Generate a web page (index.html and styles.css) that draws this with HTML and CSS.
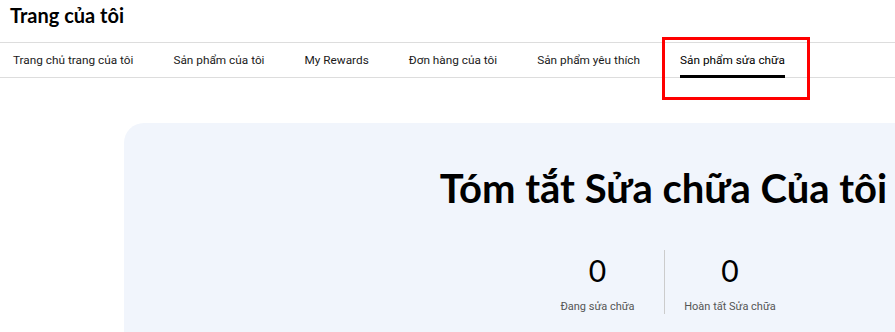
FILE: index.html
```html
<!DOCTYPE html>
<html lang="vi">
<head>
    <meta charset="UTF-8">
    <meta name="viewport" content="width=device-width, initial-scale=1.0">
    <title>Trang của tôi</title>
    <link rel="stylesheet" href="styles.css">
</head>
<body>
    <div class="page">
        <h1 class="page-title">Trang của tôi</h1>
        <nav class="tabs">
            <a class="tab" href="#">Trang chủ trang của tôi</a>
            <a class="tab" href="#">Sản phẩm của tôi</a>
            <a class="tab" href="#">My Rewards</a>
            <a class="tab" href="#">Đơn hàng của tôi</a>
            <a class="tab" href="#">Sản phẩm yêu thích</a>
            <a class="tab active" href="#">Sản phẩm sửa chữa<span class="highlight"></span></a>
        </nav>
        <section class="summary">
            <h2>Tóm tắt Sửa chữa Của tôi</h2>
            <div class="stats">
                <div class="stat">
                    <div class="stat-num">0</div>
                    <div class="stat-label">Đang sửa chữa</div>
                </div>
                <div class="stat">
                    <div class="stat-num">0</div>
                    <div class="stat-label">Hoàn tất Sửa chữa</div>
                </div>
            </div>
        </section>
    </div>
</body>
</html>
```
FILE: styles.css
```css
:root {
    --text-color: #000;
    --tab-color: #1a1a1a;
    --border-color: #ddd;
    --card-bg: #f1f5fc;
}
body {
    margin: 0;
    background: #fff;
    color: var(--text-color);
    font-family: 'Roboto', sans-serif;
}
.page {
    width: 895px;
    height: 332px;
    overflow: hidden;
}
.page-title {
    margin: 0;
    height: 42px;
    padding: 0 10px;
    font-family: 'Lato', sans-serif;
    font-size: 20px;
    font-weight: 700;
    line-height: 30px;
    box-sizing: border-box;
}
.tabs {
    display: flex;
    gap: 40px;
    padding: 0 13px;
    border-top: 1px solid var(--border-color);
    border-bottom: 1px solid var(--border-color);
    height: 34px;
}
.tab {
    position: relative;
    color: var(--tab-color);
    text-decoration: none;
    font-size: 11.8px;
    line-height: 34px;
    white-space: nowrap;
}
.tab.active {
    color: #000;
}
.tab.active::after {
    content: "";
    position: absolute;
    left: 0;
    right: 0;
    bottom: -1px;
    height: 3px;
    background: #000;
}
.highlight {
    position: absolute;
    top: -6px;
    left: -18px;
    right: -25px;
    bottom: -23px;
    border: 3px solid #f00;
}
.summary {
    margin: 45px 0 0 124px;
    width: 1079px;
    height: 209px;
    background: var(--card-bg);
    border-radius: 20px 20px 0 0;
    padding-top: 40px;
    box-sizing: border-box;
}
.summary h2 {
    margin: 0;
    text-align: center;
    font-family: 'Lato', sans-serif;
    font-size: 40px;
    font-weight: 700;
    line-height: 50px;
}
.stats {
    display: flex;
    justify-content: center;
    margin-top: 37px;
}
.stat {
    width: 132px;
    height: 64px;
    padding-top: 5px;
    box-sizing: border-box;
    text-align: center;
}
.stat + .stat {
    border-left: 1px solid #ccc;
}
.stat-num {
    font-family: 'Lato', sans-serif;
    font-size: 30px;
    line-height: 30px;
}
.stat-label {
    margin-top: 14px;
    font-size: 11px;
    line-height: 16px;
    color: #555;
}
```
